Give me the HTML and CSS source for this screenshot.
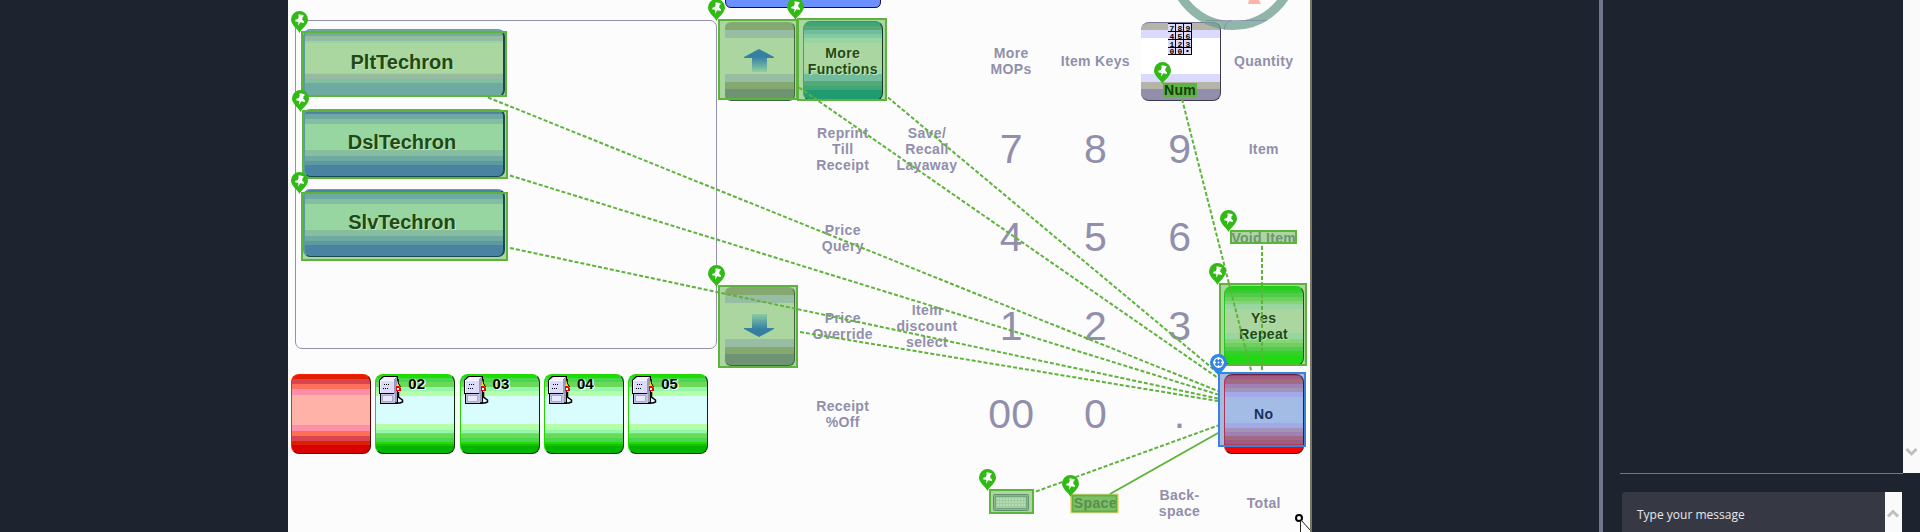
FILE: index.html
```
<!DOCTYPE html>
<html lang="en">
<head>
<meta charset="utf-8">
<title>Point of sale map</title>
<link rel="stylesheet" href="styles.css">
</head>
<body>
<svg class="defs" width="0" height="0">
  <defs>
    <linearGradient id="up" x1="0" y1="0" x2="0" y2="1"><stop offset=".35" stop-color="#3580a2"/><stop offset="1" stop-color="#90cfa2"/></linearGradient>
    <linearGradient id="down" x1="0" y1="0" x2="0" y2="1"><stop offset="0" stop-color="#8acba2"/><stop offset=".65" stop-color="#3580a2"/></linearGradient>
    <symbol id="pump" viewBox="0 0 25 28">
      <path d="M0 4L4 0H19V28H1V18H0Z" fill="#000"/>
      <path d="M1.500 4L5 1H18L15 4Z" fill="#f0f0ff"/>
      <path d="M15 4L18 1V27H15Z" fill="#9a9abc"/>
      <rect x="1" y="4" width="14" height="13" fill="#dcdcfa"/>
      <path d="M1 4H15V5H2V17H1Z" fill="#f4f4ff"/>
      <path d="M5 8h1v1H5zM7 8h1v1H7zM9 8h1v1H9zM4 12h1v1H4zM6 12h1v1H6zM8 12h1v1H8z" fill="#000"/>
      <rect x="2" y="18" width="14" height="9" fill="#c2c2e4"/>
      <rect x="3.500" y="19.500" width="10" height="6" fill="#e8e8ff" stroke="#a8a8cc"/>
      <path d="M18 4L21 10V12H17V9H18Z" fill="#ffe000"/>
      <path d="M19.300 3V7L21.500 11" stroke="#000" fill="none"/>
      <path d="M17 10h3l2 2v3h-5z" fill="#f00000"/><rect x="18" y="12" width="2" height="2" fill="#fff"/>
      <path d="M19.500 16V21L23.500 24V26L21 27H16" stroke="#000" stroke-width="1.500" fill="none"/>
    </symbol>
    <symbol id="pin" viewBox="0 0 18 22" overflow="visible">
      <path d="M9 22C7 17.500.5 14 .5 8.500a8.500 8.500 0 0 1 17 0C17.500 14 11 17.500 9 22Z" fill="#31b916"/>
      <path d="M8.300 3.200L13.200 4.200L12.800 5.800L12 6.200L11.700 8.800L13.600 10.500L13.300 12L9.800 11.300L7.500 14.800L8 11L4.600 10.200L5 8.700L7.300 7.900L8.300 5.500L7.800 4.800Z" fill="#fff"/>
    </symbol>
  </defs>
</svg>
<div class="screen">
  <main class="pos">
    <svg class="layer fills" viewBox="288 0 1022 532">
      <g fill="#abd6a0">
        <rect x="302" y="32" width="205" height="65"/><rect x="303" y="111" width="204" height="67"/><rect x="302" y="193" width="205" height="67"/>
        <rect x="719" y="20" width="78" height="79"/><rect x="798" y="19" width="88" height="81"/><rect x="719" y="286" width="78" height="81"/>
        <rect x="1220" y="284" width="86" height="81"/><rect x="1231" y="231" width="65" height="12"/><rect x="990" y="490" width="43" height="23"/>
      </g>
      <rect x="1070" y="493.500" width="49" height="20" fill="#f6dc98"/>
      <rect x="1072" y="495" width="45" height="17" fill="#80bd6b"/>
      <rect x="1219" y="373" width="86" height="73" fill="#a2bce6"/>
    </svg>
    <section class="left">
      <div class="grades">
        <button class="grade plt">PltTechron</button>
        <button class="grade dark">DslTechron</button>
        <button class="grade dark">SlvTechron</button>
      </div>
      <div class="pumps">
        <div class="tile red"></div>
        <div class="tile pump"><svg width="25" height="28"><use href="#pump"/></svg><span>02</span></div>
        <div class="tile pump"><svg width="25" height="28"><use href="#pump"/></svg><span>03</span></div>
        <div class="tile pump"><svg width="25" height="28"><use href="#pump"/></svg><span>04</span></div>
        <div class="tile pump"><svg width="25" height="28"><use href="#pump"/></svg><span>05</span></div>
      </div>
    </section>
    <section class="keys">
      <div class="cell"><div class="tile arrow"><svg width="30" height="24"><path d="M15 0L30 8V9H23V23H8V9H0V8Z" fill="url(#up)"/></svg></div></div>
      <div class="cell"><div class="tile more">More<br>Functions</div></div>
      <div class="cell"></div>
      <div class="cell">More<br>MOPs</div>
      <div class="cell">Item Keys</div>
      <div class="cell"><div class="tile num">
        <svg width="24" height="32"><rect width="24" height="32" fill="#000"/><path d="M0 1h7v7H0zM8 1h7v7H8zM16 1h7v7h-7zM0 9h7v7H0zM8 9h7v7H8zM16 9h7v7h-7zM0 17h7v7H0zM8 17h7v7H8zM16 17h7v7h-7zM0 25h7v6H0zM8 25h7v6H8zM16 25h7v6h-7z" fill="#dcdcfa"/><g class="mini"><text x="1.500" y="7.500">7</text><text x="9.500" y="7.500">8</text><text x="17.500" y="7.500">9</text><text x="1.500" y="15.500">4</text><text x="9.500" y="15.500">5</text><text x="17.500" y="15.500">6</text><text x="1.500" y="23.500">1</text><text x="9.500" y="23.500">2</text><text x="17.500" y="23.500">3</text><text x="1.500" y="31">0</text><text x="9.500" y="31">0</text></g><path d="M18.500 27h2v2h-2z"/></svg>
        <span>Num</span></div></div>
      <div class="cell">Quantity</div>

      <div class="cell"></div><div class="cell">Reprint<br>Till<br>Receipt</div><div class="cell">Save/<br>Recall<br>Layaway</div>
      <div class="cell digit">7</div><div class="cell digit">8</div><div class="cell digit">9</div><div class="cell">Item</div>

      <div class="cell"></div><div class="cell">Price<br>Query</div><div class="cell"></div>
      <div class="cell digit">4</div><div class="cell digit">5</div><div class="cell digit">6</div><div class="cell void">Void Item</div>

      <div class="cell"><div class="tile arrow"><svg width="30" height="24"><path d="M15 23L30 15V14H23V0H8V14H0V15Z" fill="url(#down)"/></svg></div></div>
      <div class="cell">Price<br>Override</div><div class="cell">Item<br>discount<br>select</div>
      <div class="cell digit">1</div><div class="cell digit">2</div><div class="cell digit">3</div>
      <div class="cell"><div class="tile yes">Yes<br>Repeat</div></div>

      <div class="cell"></div><div class="cell">Receipt<br>%Off</div><div class="cell"></div>
      <div class="cell digit">00</div><div class="cell digit">0</div><div class="cell digit">.</div>
      <div class="cell"><div class="tile no">No</div></div>

      <div class="cell"></div><div class="cell"></div><div class="cell"></div>
      <div class="cell"><svg width="36" height="17"><rect x=".5" y=".5" width="35" height="16" rx="1" fill="#87b68a" stroke="#64906f"/><rect x="2.500" y="2.500" width="31" height="12" fill="#9dcda0" stroke="#74a67d"/><path d="M4 5H32M4 8H32M4 11H32" stroke="#b5dcb0" stroke-width="2" stroke-dasharray="2 1"/></svg></div>
      <div class="cell space">Space</div><div class="cell">Back-<br>space</div><div class="cell">Total</div>
    </section>
    <svg class="layer marks" viewBox="288 0 1022 532">
      <path d="M725.500 0V2Q726 7.500 731 7.500H875Q880.500 7.500 880.500 2V0" fill="#6c90ff" stroke="#10104a"/>
      <circle cx="1233" cy="-35.500" r="61" fill="none" stroke="#6c9f8e" stroke-opacity=".75" stroke-width="9"/>
      <path d="M1249 0H1259L1261 4H1248Z" fill="#ffb3a6"/>
      <path d="M1206 20.500H1267M1224 30Q1225 21 1232 20.500" stroke="#7878a8" stroke-opacity=".6" fill="none"/>
      <g class="boxes">
        <rect x="302" y="32" width="204" height="64"/><rect x="303" y="111" width="204" height="67"/><rect x="302" y="193" width="205" height="67"/>
        <rect x="719" y="20" width="78" height="79"/><rect x="798" y="19" width="88" height="81"/><rect x="719" y="286" width="78" height="81"/>
        <rect x="1220" y="284" width="86" height="81"/><rect x="1231" y="231" width="65" height="12"/><rect x="990" y="490" width="43" height="23"/><rect x="1072.500" y="495.500" width="44" height="16"/>
      </g>
      <g class="links">
        <path d="M488 97.500L1218 391M510 175.500L1218 394.500M510 248L1218 398.500M799 87.500L1218 378M888 97.500L1218 373M800 332L1218 401M1182 99L1251.500 372M1262 246V372M1036 491.500L1218 425.500"/>
      </g>
      <path class="solid" d="M1110 494L1218 433"/>
      <rect x="1219" y="373" width="86" height="73" fill="none" stroke="#3c82d8" stroke-width="2"/>
      <g>
        <use href="#pin" x="290.500" y="11" width="18" height="22"/><use href="#pin" x="291.500" y="90" width="18" height="22"/><use href="#pin" x="290.500" y="172" width="18" height="22"/>
        <use href="#pin" x="707.500" y="-1" width="18" height="22"/><use href="#pin" x="786.500" y="-2" width="18" height="22"/><use href="#pin" x="707.500" y="265" width="18" height="22"/>
        <use href="#pin" x="1153.500" y="62" width="18" height="22"/><use href="#pin" x="1219.500" y="210" width="18" height="22"/><use href="#pin" x="1208.500" y="263" width="18" height="22"/>
        <use href="#pin" x="978.500" y="469" width="18" height="22"/><use href="#pin" x="1061.500" y="475" width="18" height="22"/>
      </g>
      <path d="M1218.500 376C1216.500 371.500 1210 368 1210 362.500a8.500 8.500 0 0 1 17 0C1227 368 1220.500 371.500 1218.500 376Z" fill="#3186e4"/>
      <g fill="none" stroke="#fff" stroke-width="1.300"><circle cx="1218.500" cy="362.500" r="4.500"/><path d="M1218.500 357V360M1218.500 365V368M1213 362.500H1216M1221 362.500H1224"/></g>
      <circle cx="1218.500" cy="362.500" r="1" fill="#fff"/>
      <circle cx="1299" cy="518" r="3" fill="#fff" stroke="#000" stroke-width="2"/><path d="M1301 520L1310 530M1300.500 522V532" stroke="#222" fill="none"/>
    </svg>
  </main>
  <aside class="chat">
    <div class="history"><div class="log"></div><div class="bar"><svg width="17" height="26"><path d="M3.500 2L8.500 7L13.500 2" fill="none" stroke="#bfbfbf" stroke-width="3"/></svg></div></div>
    <div class="entry"><span>Type your message</span><div class="bar up"><svg width="17" height="12"><path d="M3 9.500L8 4.500L13 9.500" fill="none" stroke="#bfbfbf" stroke-width="3"/></svg></div></div>
  </aside>
</div>
</body>
</html>
```
FILE: styles.css
```
* { box-sizing: border-box; }
body { margin: 0; background: #1e2330; overflow: hidden; font-family: "Liberation Sans", Arial, sans-serif; }
.defs { position: absolute; }
.screen { display: flex; justify-content: space-between; height: 532px; padding-left: 288px; }
.pos { position: relative; display: flex; width: 1024px; height: 532px; background: #fcfcfc; border-right: 2px solid #77785f; overflow: hidden; }
.layer { position: absolute; top: 0; left: 0; width: 1022px; height: 532px; }
.left, .keys { position: relative; }
.marks { pointer-events: none; }

.left { width: 428px; padding: 20px 0 0 3px; }
.grades { width: 422px; height: 329px; margin-left: 4px; padding: 8px 7px; border: 1px solid #9290ab; border-radius: 7px; display: flex; flex-direction: column; gap: 12px; }
.grade { flex: none; width: 202px; height: 68px; padding: 0 4px 1px 0; border: 1px solid #174a4d; border-top-color: #6890f0; border-left: 2px solid #579ca0; border-right-width: 2px; border-radius: 7px; font: bold 20px "Liberation Sans", Arial, sans-serif; color: #1f4a15; text-shadow: 1px 1px 0 #c6e3b8; }
.grade.plt { background: linear-gradient(#70ada0 0 6px, #96bba0 6px 11px, #94d5a1 11px 13px, #aad6a0 13px 43px, #94d5a1 43px 44px, #96bba0 44px 49px, #80bfa0 49px 53px, #6faaa0 53px); }
.grade.dark { background: linear-gradient(#4a85a1 0 4px, #6eaaa2 4px 9px, #84bea2 9px 14px, #97d5a1 14px 40px, #87be9f 40px 46px, #6eaaa0 46px 51px, #5a9aa0 51px 55px, #4a83a2 55px); }

.pumps { display: flex; gap: 4.300px; margin-top: 25px; }
.tile { flex: none; width: 80px; height: 80px; border-radius: 8px; border: 1px solid; display: flex; align-items: center; justify-content: center; }
.red { border-color: #ff2000 #500 #700 #ff2000; background: linear-gradient(#dc2000 0 4px, #d84450 4px 9px, #ff6f5c 9px 14px, #ff8fa8 14px 20px, #ffb3a8 20px 50px, #ff8fa8 50px 56px, #ff6f55 56px 61px, #d84450 61px 66px, #dc2000 66px 70px, #d80000 70px); }
.pump { border-color: #20d800 #003000 #003000 #20d800; align-items: flex-start; justify-content: flex-start; padding: 1px 0 0 3px; background: linear-gradient(#20dc00 0 3px, #46d850 3px 7px, #6cd858 7px 12px, #90f8a8 12px 16px, #b4ffa8 16px 21px, #d9fcfc 21px 49px, #b4ffa8 49px 55px, #90f8a8 55px 58px, #80d880 58px 59px, #6cd858 59px 63px, #46d850 63px 67px, #20dc00 67px 69px, #20bc00 69px 71px, #00b600 71px); }
.pump span { margin: -1px 0 0 4px; font: bold 15px/17px "Liberation Sans", Arial, sans-serif; color: #000; text-shadow: 1px 1px 0 #fff, 1px 0 0 #fff; }

.keys { display: grid; grid-template-columns: repeat(7, 84.200px); grid-template-rows: repeat(6, 88.300px); padding: 17px 0 0 .5px; }
.cell { display: flex; align-items: center; justify-content: center; text-align: center; white-space: nowrap; font: bold 14px/16px "Liberation Sans", Arial, sans-serif; letter-spacing: .35px; color: #918fab; }
.digit { font-size: 41px; font-weight: normal; line-height: 41px; letter-spacing: 0; }
.void { color: #6e9474; letter-spacing: .3px; }
.space { color: #55914a; }
.arrow { width: 70px; height: 79px; margin-left: 2px; border-color: #86aa76 #3e6842 #3e6842 #86aa76; border-left: 0; border-radius: 6px; background: linear-gradient(#84a870 0 7px, #97bda2 7px 15px, #abd6a0 15px 51px, #97bda2 51px 59px, #84a870 59px 66px, #6e9474 66px); }
.more { color: #1f4a15; text-shadow: 1px 1px 0 #c6e3b8; border-color: #2b9b70 #103c24 #103c24 #35a878; background: linear-gradient(#3da876 0 4px, #57a874 4px 8px, #70bd9d 8px 12px, #82cba0 12px 16px, #97d6a1 16px 21px, #aad6a1 21px 48px, #97d6a1 48px 52px, #70bd9d 52px 59px, #57a874 59px 64px, #3da876 64px 68px, #209a70 68px); }
.num { margin-left: 2px; height: 79px; flex-direction: column; justify-content: flex-start; border-color: #77779a #3a3a4c #3a3a4c #b4b4a8; border-left: 0; background: linear-gradient(#b4b4a8 0 7px, #dadaff 7px 15px, #fff 15px 51px, #dadaff 51px 59px, #b4b4a8 59px 66px, #918fab 66px); }
.num svg { flex: none; margin-left: -1px; }
.num span { width: 34px; height: 14px; margin-top: 28px; line-height: 15px; background: #5eb342; color: #143f0b; }
.mini { font: bold 8px "Liberation Mono", monospace; letter-spacing: 0; }
.yes { color: #1f4a15; text-shadow: 1px 1px 0 #b6e3b8; border-color: #20cc18 #145818 #145818 #24c61c; background: linear-gradient(#22d418 0 3px, #3bc835 3px 6px, #4fcd4a 6px 10px, #70cd60 10px 14px, #84d675 14px 17px, #97d5a1 17px 22px, #abd6a0 22px 46px, #97d5a1 46px 52px, #84d675 52px 56px, #70cd60 56px 60px, #4fcd4a 60px 64px, #34d028 64px 68px, #20d814 68px); }
.no { color: #17315e; border-color: #6b2440 #401830 #500 #b03050; background: linear-gradient(#a84060 0 1px, #a35a80 1px 4px, #a06a82 4px 9px, #a080b5 9px 13px, #a094b8 13px 17px, #a2a8e8 17px 22px, #a2bce6 22px 48px, #a2a8e8 48px 53px, #a094b8 53px 57px, #a080b5 57px 61px, #a06a82 61px 65px, #a35a80 65px 69px, #a84060 69px 72px, #ff0000 72px); }

.boxes { fill: none; stroke: #5eb33c; stroke-width: 2; }
.links { fill: none; stroke: #5eb33c; stroke-width: 2; stroke-dasharray: 4 2; }
.solid { stroke: #5eb33c; stroke-width: 2; }

.chat { width: 321px; height: 532px; border-left: 4px solid #70778d; padding-left: 17px; }
.history { display: flex; height: 473px; margin-bottom: 19px; }
.log { width: 283px; height: 474px; border-bottom: 1px solid #70778a; }
.bar { width: 17px; height: 100%; background: #fafafa; display: flex; align-items: flex-end; }
.entry { display: flex; justify-content: space-between; width: 280px; height: 60px; margin-left: 2px; padding-left: 15px; border-radius: 4px 0 0 0; background: #363843; color: #e8e8ec; font: 12px/16px "Open Sans", "Noto Sans", sans-serif; }
.entry span { padding-top: 15px; }
.bar.up { align-items: flex-start; padding-top: 15px; }
```
